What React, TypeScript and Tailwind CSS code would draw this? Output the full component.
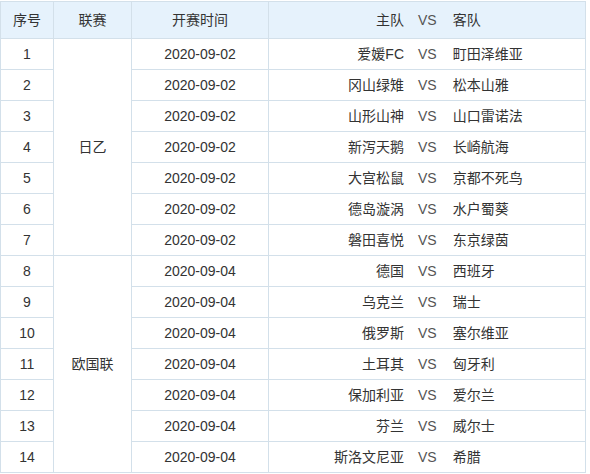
const rows = [
  ['1', '2020-09-02', '爱媛FC', '町田泽维亚'],
  ['2', '2020-09-02', '冈山绿雉', '松本山雅'],
  ['3', '2020-09-02', '山形山神', '山口雷诺法'],
  ['4', '2020-09-02', '新泻天鹅', '长崎航海'],
  ['5', '2020-09-02', '大宫松鼠', '京都不死鸟'],
  ['6', '2020-09-02', '德岛漩涡', '水户蜀葵'],
  ['7', '2020-09-02', '磐田喜悦', '东京绿茵'],
  ['8', '2020-09-04', '德国', '西班牙'],
  ['9', '2020-09-04', '乌克兰', '瑞士'],
  ['10', '2020-09-04', '俄罗斯', '塞尔维亚'],
  ['11', '2020-09-04', '土耳其', '匈牙利'],
  ['12', '2020-09-04', '保加利亚', '爱尔兰'],
  ['13', '2020-09-04', '芬兰', '威尔士'],
  ['14', '2020-09-04', '斯洛文尼亚', '希腊'],
]

function Matchup({ home, away }: { home: string; away: string }) {
  return (
    <div className="flex items-center">
      <span className="w-[135px] text-right">{home}</span>
      <span className="ml-[14px] text-[#555]">VS</span>
      <span className="ml-[16px]">{away}</span>
    </div>
  )
}

export default function App() {
  const cell = 'border border-[#d3e0ea] h-[31px] p-0'
  return (
    <div className="w-[590px] h-[474px] bg-white pt-px font-['Liberation_Sans','Noto_Sans_CJK_SC',sans-serif] text-[14px] text-[#333]">
      <table className="w-[586px] border-collapse table-fixed">
        <colgroup>
          <col className="w-[53px]" />
          <col className="w-[78px]" />
          <col className="w-[137px]" />
          <col />
        </colgroup>
        <thead>
          <tr className="bg-[#e6f2fc]">
            <th className={`${cell} h-[37px] font-normal text-center`}>序号</th>
            <th className={`${cell} h-[37px] font-normal text-center`}>联赛</th>
            <th className={`${cell} h-[37px] font-normal text-center`}>开赛时间</th>
            <th className={`${cell} h-[37px] font-normal text-left`}>
              <Matchup home="主队" away="客队" />
            </th>
          </tr>
        </thead>
        <tbody>
          {rows.map(([no, date, home, away], i) => (
            <tr key={no}>
              <td className={`${cell} text-center`}>{no}</td>
              {i === 0 && (
                <td rowSpan={7} className={`${cell} text-center`}>
                  日乙
                </td>
              )}
              {i === 7 && (
                <td rowSpan={7} className={`${cell} text-center`}>
                  欧国联
                </td>
              )}
              <td className={`${cell} text-center`}>{date}</td>
              <td className={cell}>
                <Matchup home={home} away={away} />
              </td>
            </tr>
          ))}
        </tbody>
      </table>
    </div>
  )
}
